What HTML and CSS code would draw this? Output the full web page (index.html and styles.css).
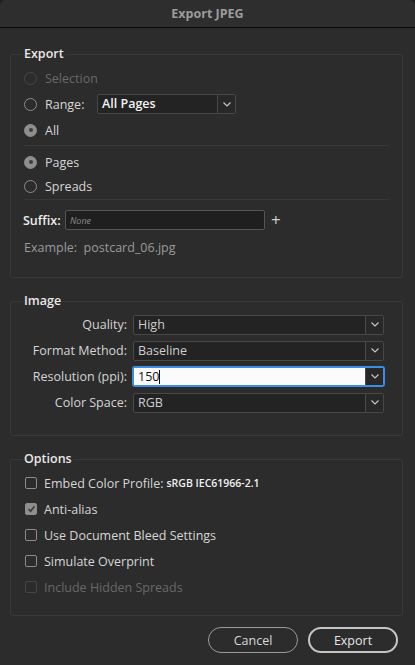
FILE: index.html
```html
<!DOCTYPE html>
<html lang="en">
<head>
    <meta charset="UTF-8">
    <meta name="viewport" content="width=device-width, initial-scale=1.0">
    <title>Export JPEG</title>
    <link rel="stylesheet" href="styles.css">
</head>
<body>
    <!-- Export JPEG dialog -->
    <div class="window">
        <div class="titlebar">Export JPEG</div>

        <div class="dialog">
            <fieldset class="group group-export">
                <legend>Export</legend>
                <div class="row disabled"><span class="radio"></span>Selection</div>
                <div class="row">
                    <span class="radio"></span>
                    <span class="range-label">Range:</span>
                    <div class="select select-range">
                        <span class="select-value">All Pages</span>
                        <span class="select-arrow"><svg width="8" height="5" viewBox="0 0 8 5"><polyline points="0.5,0.5 4,4 7.5,0.5" fill="none" stroke="#c4c4c4" stroke-width="1.2"/></svg></span>
                    </div>
                </div>
                <div class="row"><span class="radio checked"></span>All</div>
                <div class="sep"></div>
                <div class="row row-short"><span class="radio checked"></span>Pages</div>
                <div class="row row-short"><span class="radio"></span>Spreads</div>
                <div class="sep sep-low"></div>
                <div class="suffix-row">
                    <span class="suffix-label">Suffix:</span>
                    <div class="text-input"><span class="placeholder">None</span></div>
                    <span class="plus">+</span>
                </div>
                <div class="example">Example:&nbsp; postcard_06.jpg</div>
            </fieldset>

            <fieldset class="group group-image">
                <legend>Image</legend>
                <div class="field">
                    <span class="field-label">Quality:</span>
                    <div class="select">
                        <span class="select-value">High</span>
                        <span class="select-arrow"><svg width="8" height="5" viewBox="0 0 8 5"><polyline points="0.5,0.5 4,4 7.5,0.5" fill="none" stroke="#c4c4c4" stroke-width="1.2"/></svg></span>
                    </div>
                </div>
                <div class="field">
                    <span class="field-label">Format Method:</span>
                    <div class="select">
                        <span class="select-value">Baseline</span>
                        <span class="select-arrow"><svg width="8" height="5" viewBox="0 0 8 5"><polyline points="0.5,0.5 4,4 7.5,0.5" fill="none" stroke="#c4c4c4" stroke-width="1.2"/></svg></span>
                    </div>
                </div>
                <div class="field">
                    <span class="field-label">Resolution (ppi):</span>
                    <div class="select focused">
                        <span class="select-value">150<span class="caret"></span></span>
                        <span class="select-arrow"><svg width="8" height="5" viewBox="0 0 8 5"><polyline points="0.5,0.5 4,4 7.5,0.5" fill="none" stroke="#c4c4c4" stroke-width="1.2"/></svg></span>
                    </div>
                </div>
                <div class="field">
                    <span class="field-label">Color Space:</span>
                    <div class="select">
                        <span class="select-value">RGB</span>
                        <span class="select-arrow"><svg width="8" height="5" viewBox="0 0 8 5"><polyline points="0.5,0.5 4,4 7.5,0.5" fill="none" stroke="#c4c4c4" stroke-width="1.2"/></svg></span>
                    </div>
                </div>
            </fieldset>

            <fieldset class="group group-options">
                <legend>Options</legend>
                <div class="row"><span class="checkbox"></span>Embed Color Profile:<span class="profile">sRGB IEC61966-2.1</span></div>
                <div class="row"><span class="checkbox checked"><svg width="9" height="8" viewBox="0 0 9 8"><polyline points="1.5,4 3.6,6.2 7.5,1.2" fill="none" stroke="#3a3a3a" stroke-width="1.6"/></svg></span>Anti-alias</div>
                <div class="row"><span class="checkbox"></span>Use Document Bleed Settings</div>
                <div class="row"><span class="checkbox"></span>Simulate Overprint</div>
                <div class="row disabled"><span class="checkbox"></span>Include Hidden Spreads</div>
            </fieldset>

            <div class="actions">
                <button class="btn">Cancel</button>
                <button class="btn btn-default">Export</button>
            </div>
        </div>
    </div>
</body>
</html>
```

FILE: styles.css
```css
/* Dark dialog, InDesign style */
body {
    margin: 0;
    background: #1e1e1e;
    font-family: "Open Sans", "Noto Sans", sans-serif;
    font-size: 12.5px;
    color: #d6d6d6;
}

.window {
    width: 415px;
    height: 665px;
    background: #2c2c2c;
    border-radius: 6px 6px 0 0;
    overflow: hidden;
}

.titlebar {
    height: 27px;
    line-height: 27px;
    text-align: center;
    font-weight: bold;
    font-size: 12.5px;
    color: #9c9c9c;
    background: #2e2e2e;
    border-bottom: 1px solid #0b0b0b;
}

.dialog {
    padding: 18px 12px 0 10px;
}

/* legend sits half above the border, so the margin is 8px short of the visible gap */
.group {
    margin: 0 0 15px 0;
    padding: 0 12px;
    border: 1px solid #383838;
    border-radius: 2px;
}

.group legend {
    padding: 0 1px;
    line-height: 16px;
    font-weight: 600;
    font-size: 12.5px;
    color: #e8e8e8;
}

.group-export {
    padding-top: 3px;
    padding-bottom: 21px;
}

.group-image {
    padding-top: 6px;
    padding-bottom: 23px;
}

.group-options {
    padding-top: 3px;
    padding-bottom: 15px;
    margin-bottom: 11px;
}

.row {
    display: flex;
    align-items: center;
    height: 26px;
    padding-left: 1px;
}

.row-short {
    height: 24px;
}

.disabled {
    color: #686868;
}

.radio {
    width: 11px;
    height: 11px;
    border: 1px solid #8c8c8c;
    border-radius: 50%;
    margin-right: 8px;
    flex-shrink: 0;
    position: relative;
}

.disabled .radio {
    border-color: #474747;
}

.radio.checked {
    background: #8e8e8e;
}

.radio.checked::after {
    content: "";
    position: absolute;
    left: 3.5px;
    top: 3.5px;
    width: 4px;
    height: 4px;
    border-radius: 50%;
    background: #3c3c3c;
}

.range-label {
    width: 52px;
}

.select {
    display: flex;
    height: 18px;
    background: #232323;
    border: 1px solid #484848;
    border-radius: 2px;
    flex: 1;
}

.select-range {
    flex: none;
    width: 137px;
}

.select-range .select-value {
    color: #f2f2f2;
    font-weight: 600;
}

.select-value {
    flex: 1;
    padding-left: 4px;
    line-height: 18px;
    color: #cfcfcf;
}

.select-arrow {
    width: 17px;
    border-left: 1px solid #484848;
    display: flex;
    align-items: center;
    justify-content: center;
    background: #282828;
}

.select.focused {
    border-color: #3a8ee6;
    box-shadow: 0 0 0 1px #3a8ee6;
    height: 17px;
    margin: 1px 0;
}

.select.focused .select-value {
    background: #fbfbfb;
    color: #111;
    line-height: 17px;
}

.caret {
    display: inline-block;
    width: 1px;
    height: 14px;
    background: #111;
    vertical-align: -3px;
}

.sep {
    height: 1px;
    background: #383838;
    margin: 2px 1px 4px 1px;
}

.sep-low {
    margin: 1px 1px 10px 1px;
}

.suffix-row {
    display: flex;
    align-items: center;
    height: 20px;
}

.suffix-label {
    font-weight: 600;
    color: #ececec;
    width: 42px;
}

.text-input {
    width: 198px;
    height: 18px;
    background: #1f1f1f;
    border: 1px solid #555;
    border-radius: 2px;
    display: flex;
    align-items: center;
}

.placeholder {
    padding-left: 4px;
    font-style: italic;
    font-size: 9px;
    color: #8a8a8a;
}

.plus {
    margin-left: 6px;
    font-size: 17px;
    line-height: 16px;
    color: #cfcfcf;
}

.example {
    margin-top: 10px;
    line-height: 16px;
    color: #9a9a9a;
    padding-left: 1px;
}

.field {
    display: flex;
    align-items: center;
    height: 19px;
    margin-bottom: 7px;
    padding-right: 6px;
}

.field:last-child {
    margin-bottom: 0;
}

.field-label {
    width: 104px;
    margin-right: 6px;
    text-align: right;
    color: #d4d4d4;
    white-space: nowrap;
}

.checkbox {
    width: 10px;
    height: 10px;
    border: 1px solid #8c8c8c;
    border-radius: 2px;
    margin: 0 7px 0 1px;
    flex-shrink: 0;
    display: flex;
    align-items: center;
    justify-content: center;
}

.checkbox.checked {
    background: #8e8e8e;
}

.disabled .checkbox {
    border-color: #464646;
}

.profile {
    margin-left: 3px;
    font-size: 10.5px;
    font-weight: 600;
    color: #f0f0f0;
}

.actions {
    display: flex;
    justify-content: flex-end;
    gap: 10px;
    padding-right: 5px;
}

.btn {
    width: 90px;
    height: 26px;
    border-radius: 13px;
    background: transparent;
    border: 1px solid #9a9a9a;
    color: #d8d8d8;
    font-family: inherit;
    font-size: 12.5px;
}

.btn-default {
    border: 2px solid #c6c6c6;
    color: #e6e6e6;
}
```
